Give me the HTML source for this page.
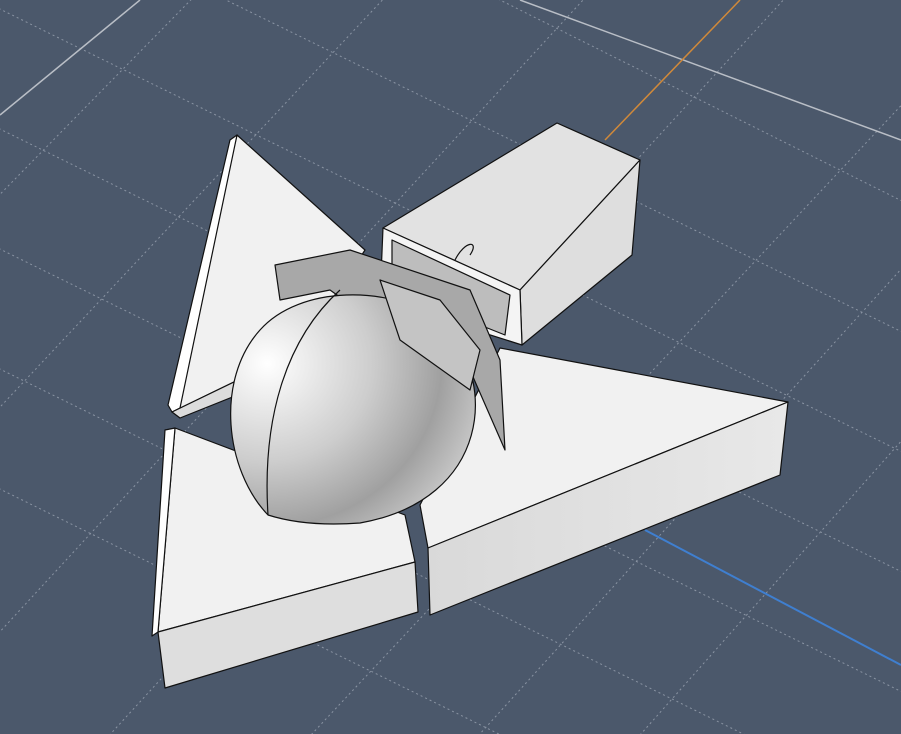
<!DOCTYPE html>
<html><head><meta charset="utf-8"><style>
html,body{margin:0;padding:0;background:#4b586b;width:901px;height:734px;overflow:hidden}
svg{display:block}
</style></head><body>
<svg width="901" height="734" viewBox="0 0 901 734" xmlns="http://www.w3.org/2000/svg">
<defs>
<radialGradient id="dome" cx="0.15" cy="0.3" r="0.95">
<stop offset="0" stop-color="#ffffff"/><stop offset="0.45" stop-color="#cdcdcd"/><stop offset="0.75" stop-color="#a0a0a0"/><stop offset="1" stop-color="#d0d0d0"/>
</radialGradient>
<linearGradient id="side" x1="0" y1="0" x2="1" y2="0"><stop offset="0" stop-color="#d9d9d9"/><stop offset="1" stop-color="#e8e8e8"/></linearGradient>
</defs>
<g stroke="#8a94a3" stroke-width="1" stroke-dasharray="2,3" fill="none">
<line x1="-100" y1="-40" x2="1000" y2="500"/>
<line x1="-100" y1="80" x2="1000" y2="620"/>
<line x1="-100" y1="200" x2="1000" y2="740"/>
<line x1="-100" y1="320" x2="1000" y2="860"/>
<line x1="-100" y1="440" x2="1000" y2="980"/>
<line x1="-100" y1="-160" x2="1000" y2="380"/>
<line x1="100" y1="-200" x2="1000" y2="250"/>
<line x1="230" y1="-40" x2="-300" y2="500"/>
<line x1="420" y1="-40" x2="-200" y2="620"/>
<line x1="620" y1="-40" x2="-100" y2="740"/>
<line x1="820" y1="-40" x2="50" y2="800"/>
<line x1="1000" y1="0" x2="250" y2="800"/>
<line x1="1000" y1="160" x2="420" y2="800"/>
<line x1="1000" y1="330" x2="600" y2="780"/>
</g>
<line x1="140" y1="0" x2="0" y2="115" stroke="#b9bec6" stroke-width="1.5"/>
<line x1="520" y1="0" x2="901" y2="140" stroke="#b9bec6" stroke-width="1.5"/>
<line x1="605" y1="140" x2="740" y2="0" stroke="#d0893a" stroke-width="1.5"/>
<line x1="645" y1="530" x2="901" y2="665" stroke="#3f7fd0" stroke-width="2"/>
<g stroke="#111" stroke-width="1.2" stroke-linejoin="round">
<polygon points="237,135 365,250 300,350 172,412" fill="#f1f1f1"/>
<polygon points="237,135 230,140 168,405 172,412 180,408" fill="#ffffff"/>
<polygon points="172,412 300,350 300,370 180,418" fill="#dcdcdc"/>
<polygon points="383,228 557,123 640,160 520,290" fill="#e2e2e2"/>
<polygon points="640,160 632,255 522,345 520,290" fill="#dedede"/>
<polygon points="383,228 520,290 522,345 380,300" fill="#f4f4f4"/>
<polygon points="392,240 510,295 505,335 392,290" fill="#bdbdbd"/>
<polygon points="500,348 788,402 428,548 420,505" fill="#f1f1f1"/>
<polygon points="788,402 780,475 430,615 428,548" fill="url(#side)"/>
<polygon points="175,428 405,515 415,562 158,632" fill="#f1f1f1"/>
<polygon points="158,632 415,562 418,612 165,688" fill="#dedede"/>
<polygon points="175,428 158,632 152,636 165,430" fill="#ffffff"/>
<polygon points="275,265 350,250 470,290 500,360 505,450 470,370 400,340 330,290 280,300" fill="#a8a8a8"/>
<path d="M268,515 C225,470 215,380 260,330 C300,285 390,285 440,320 C500,380 490,500 360,523 C320,526 290,522 268,515 Z" fill="url(#dome)"/>
<path d="M268,515 C262,420 285,340 340,290" fill="none"/>
<polygon points="380,280 440,300 480,350 470,390 400,340" fill="#c4c4c4"/>
<path d="M455,260 C465,240 480,240 470,255" fill="none"/>
</g>
</svg>
</body></html>
